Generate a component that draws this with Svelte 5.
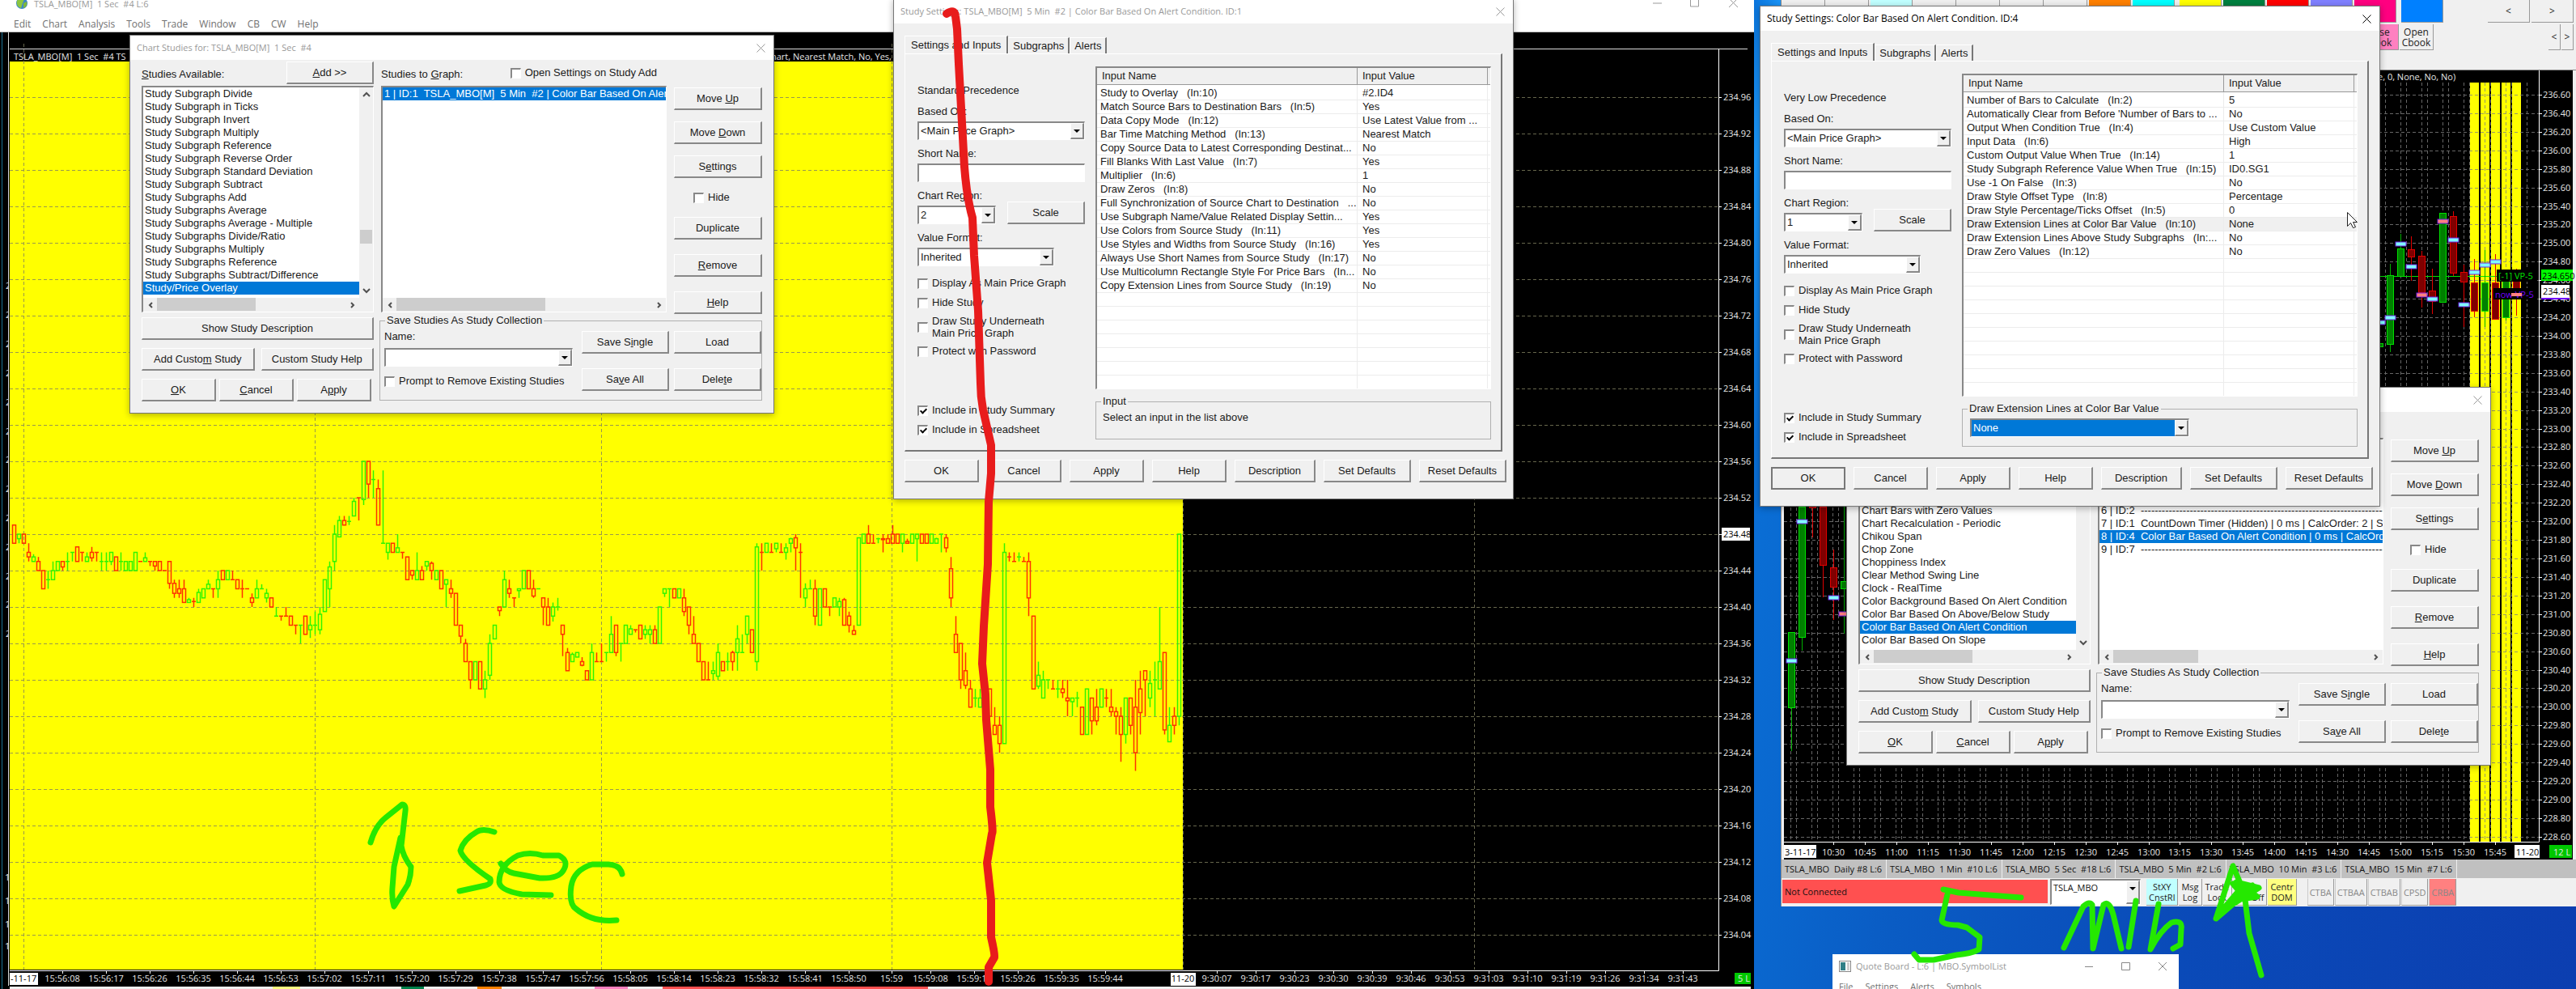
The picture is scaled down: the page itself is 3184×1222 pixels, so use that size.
<script>
    // Chart data

    // colour, high, body top, body bottom, low -- in cents from 234.48
    const secondBars = `
        r 1 1 -1 -1|g 0 0 -.5 -1|r 0 0 -1 -1|r -1 -2 -2.5 -3|g -2.2 -2.5 -3 -3|r -2.5 -3 -4 -4|r -4 -4 -6 -6|g -4 -5 -5 -6
        |g -3 -4 -5 -5|g -3 -3 -4 -4|r -3 -3 -3.6 -4|g -2 -3 -3 -4|g -2 -2 -2 -3|r -1.4 -1.4 -3 -3|r -2 -2 -2 -3|g -2 -2.5 -3 -3
        |r -1.4 -2 -2.6 -3|r -2 -2 -2 -3|g -2 -3 -3 -4|g -2 -3 -3 -4|g -2 -2 -3 -3.4|r -2.5 -2.5 -4 -4|g -2 -3 -3 -4|g -3 -3 -4 -4
        |g -3 -3 -4 -4|g -2 -2 -4 -4|r -3 -3 -3 -3|g -2 -2.6 -3 -3|r -3 -3 -3 -3.5|r -3 -3 -3.5 -4|r -3 -3 -4 -4|r -4 -4 -4 -4
        |r -3 -3 -5.4 -6|r -5 -5.4 -6.5 -7|r -5 -6 -6.5 -7|r -5 -6 -7.5 -7.5|g -7 -7.2 -7.5 -7.5|r -7 -7.4 -7.4 -8|g -6 -6.4 -7.5 -7.5|g -6 -6 -7 -7
        |g -5 -5.5 -6 -6|r -6 -6 -6 -7|g -4 -5 -6 -7|r -4 -4 -5 -5|g -4 -4 -5 -5|r -4 -5 -5 -5|r -5 -5 -6 -6|r -5 -6 -6 -7
        |r -6 -6 -6 -6|r -6.5 -7 -7.5 -8|g -5 -6 -7 -7|g -5.5 -6 -6 -6|g -6 -6.5 -7 -7.5|r -7 -7 -8 -8|g -8 -9 -9 -9|r -9 -9 -9 -9.5
        |r -8 -9 -9 -9|r -9 -9 -10 -10|r -10 -10 -10 -11|g -10 -10 -10 -12|r -9 -9 -11 -11|g -9 -10 -10.5 -11.4|g -8.5 -10 -10 -11|g -8 -8.8 -10.5 -11
        |g -5 -5 -8.5 -8.5|g -3 -3.6 -6 -8|g 1 0 -3 -4|g 2 1.5 -.3 -.3|r 2 1.5 1 1|g 2 1.4 1.4 1|g 4 3.6 2 2|r 4 4 4 1.5
        |g 8 8 3.8 3.2|r 8 8 5.5 4|g 7 6 6 4|r 6 5 1 1|g 7 -1 -1 -1|g -1 -1 -2 -2.8|r -1 -1 -2 -2|g 0 -1.5 -2 -2
        |r -2 -2 -2 -2.7|r -2.5 -2.5 -5 -5|r -4 -4 -4.5 -5|g -2 -4 -5 -5|r -3.5 -4 -5 -5|g -3 -3 -3.5 -4|r -3 -3.2 -4 -5|g -4 -4 -5 -5
        |r -4 -4 -6 -6|g -5 -5 -5.5 -8|r -5 -6 -6.5 -7|r -6.5 -6.5 -10 -10|r -10 -10 -11.2 -12|r -11.5 -12 -14 -14|r -14 -14 -16 -17|g -14 -14 -16 -16
        |r -14 -14 -17 -17|g -15 -16 -17 -18|g -11 -12 -15.5 -16|g -10 -10 -11.5 -11.5|r -8 -8 -8.4 -9|g -4 -5 -8 -8|r -5 -6 -6.5 -7|r -7 -7 -7 -8
        |g -6 -6 -6.2 -7|g -4 -4 -6 -6|r -4 -4 -6 -6|r -5 -6 -6.8 -7|g -6 -6 -6 -6|r -7 -7 -8 -10|r -7 -8 -10 -10|g -7.5 -8 -9 -9.6
        |g -7 -8 -8 -8.4|r -10 -10 -11 -13.4|r -12.5 -13 -15 -15|g -13 -13.2 -14 -14|g -13 -13 -13.5 -13.5|r -13.5 -14 -14.4 -14.5|r -15 -15 -16 -16|g -12 -13 -16 -16
        |r -13 -14 -14 -14|r -12 -14 -14 -14|g -13 -13 -13 -14|g -9 -11 -13 -13|r -10 -10 -13 -13.4|g -12 -12 -12 -14|g -10 -10 -12 -12|g -10 -10.4 -11 -11
        |r -10.5 -10.5 -10.5 -10.8|r -10 -10 -11.5 -11.5|g -10 -10.5 -11 -11.5|g -10 -10.5 -11 -12|r -10 -10.5 -12 -12|g -8 -8 -12 -12|g -6 -6 -6.5 -6.9|g -6 -6 -6 -8
        |r -6 -6 -7 -7|g -6 -6 -7 -7|r -6 -7 -8.5 -9|r -8 -8 -10 -11|r -9 -11 -12 -12|r -12 -12 -14 -14|r -14 -14 -16 -16|r -14 -16 -16 -16
        |g -14 -15 -15.3 -16|g -12 -13 -15.6 -16|r -14 -14 -15 -15|g -13 -14 -14 -15|r -12.8 -13 -14 -15|g -10 -11.5 -13 -15|g -11 -13 -13 -13|g -9 -9 -11 -12
        |r -10.5 -10.5 -13 -13|g -1 -1.4 -14 -15|r -1 -2 -2 -4|g -1 -1 -2 -2|r -1 -2 -2 -2|g -1 -1 -1.6 -2|r -1 -2 -2 -2|g -1 -1.5 -2 -2.8
        |g -.4 -.5 -1 -2|r 0 -.4 -1.5 -4|r -1 -2 -2 -7|g -5.4 -6 -7 -8|g -5 -6 -6 -6|r -5 -6 -9 -10|g -6 -6 -10 -10|r -6 -6 -8 -8
        |r -8 -8 -8 -9|g -7 -7 -8 -8|g -7 -7.4 -8 -9|r -7 -7.2 -10 -10|r -8.5 -9 -10 -10.8|r -10 -10.6 -11 -11|g -.4 -.4 -10 -10|g 0 0 -1 -1
        |r 1 0 -1 -1|r 0 -1 -1 -1|g -.4 -.5 -.5 -1|r 0 -.5 -.6 -2|r 0 -.5 -1 -1|r 1 0 -1 -1|r 0 0 -1 -1|g 0 0 -1 -2
        |r -.5 -.8 -1 -1|g 0 0 -1 -1|g 0 0 -.5 -3|r 0 0 -1 -1|r 0 0 -1 -1|g 0 0 -1 -1|g -.4 -.5 -1 -1|g 0 0 0 -2
        |r 0 -.4 -1.5 -2|r -2.5 -3.8 -7 -8|r -9 -11 -13 -13|r -12 -12 -16 -17|r -13 -15 -16.6 -17|r -16 -17 -19 -19|g -17 -18 -18 -19|g -17 -18 -19 -19
        |r -17 -17 -18 -18|r -17 -17 -20 -20|r -19 -21 -22 -22|r -20 -21 -23 -24|g -1 -2 -23 -23|r -2 -2.5 -2.5 -3|r -2 -3 -3 -3|g -2 -2.5 -2.5 -3
        |r -2.5 -3 -3 -3|r -2 -3 -7 -9|r -9 -9 -17 -17|g -14 -15.5 -16.7 -17|g -15 -16 -18 -18|g -16 -16 -16 -17|r -16 -17 -17 -17|g -16 -17 -17 -18
        |r -16 -17 -17.4 -18|r -16 -18 -18.3 -20|g -18 -18 -18.4 -20|g -17.3 -18 -18 -19|r -19 -19 -22 -22|g -17 -17 -22 -22|r -18 -18 -20.5 -22|r -17 -19 -20.5 -21
        |g -17 -17 -19 -19|r -17 -18 -18 -19|r -17 -19 -19.5 -20|r -19 -19.5 -20 -22|r -19 -20 -22 -25|g -18 -18 -22 -23|r -18 -18 -21 -22|r -16 -19 -24 -26
        |r -15 -17 -19.6 -22|r -15 -15 -16 -20|g -15 -16.4 -18 -19|g -14 -16 -16 -20|g -8 -14 -17 -17|r -13 -13 -21.5 -22|g -19 -21 -22.8 -22.8|r -19 -20 -21 -22
        |g 0 0 -20 -21`.split('|').map((bar, i) => {
            const [color, ...levels] = bar.trim().split(' ');
            const [high, top, bottom, low] = levels.map(v => 660 - Number(v) * 11.25);
            return { x: 17 + i * 6, color: color == 'g' ? '#30f500' : '#ff3000', high, top, bottom, low };
        });

    const lastPrice = '234.48';
    const secondPrices = Array.from({ length: 24 }, (_, i) => ({ y: 120 + i * 45, text: (234.96 - i * 0.04).toFixed(2) }));
    const secondDividers = [29, 389, 743, 1102, 1462, 1822];

    const secondTimes = [];
    for (let i = 0; i < 19; i++) {
        const s = 8 + i * 9;
        secondTimes.push({ x: 77 + i * 54, text: '15:' + (56 + Math.floor(s / 60)) + ':' + String(s % 60).padStart(2, '0') });
    }
    secondTimes.push({ x: 1102, text: '15:59' });
    ['15:59:08', '15:59:17', '15:59:26', '15:59:35', '15:59:44'].forEach((text, i) => secondTimes.push({ x: 1150 + i * 54, text }));
    ['9:30:07', '9:30:17', '9:30:23', '9:30:30', '9:30:39', '9:30:46', '9:30:53', '9:31:03', '9:31:10', '9:31:19', '9:31:26', '9:31:34', '9:31:43']
        .forEach((text, i) => secondTimes.push({ x: 1504 + i * 48, text }));

    const edgeMarks = [353, 389, 425, 461, 497, 533, 568, 604, 640, 676, 712, 747, 783];

    const stripColors = [
        { x: 337, w: 34, fill: '#ffff80' },
        { x: 496, w: 28, fill: '#00804a' },
        { x: 590, w: 30, fill: '#ff8000' },
        { x: 735, w: 41, fill: '#ff80c0' },
        { x: 819, w: 328, fill: '#ff5050' }
    ];

    // Five minute chart, in pixels of its own canvas (left edge of the plot is 0)
    const minuteBars = [
        { x: 9, up: true, high: 694, top: 694, bottom: 787, low: 841, mark: 729 },
        { x: 22, up: true, high: 500, top: 539, bottom: 700, low: 717, mark: 557 },
        { x: 35, up: false, high: 500, top: 500, bottom: 540, low: 577 },
        { x: 48, up: false, high: 500, top: 539, bottom: 611, low: 651 },
        { x: 61, up: false, high: 592, top: 614, bottom: 638, low: 679, mark: 651 },
        { x: 74, up: true, high: 500, top: 631, bottom: 640, low: 696, mark: 671, pink: true },
        { x: 736, up: true, high: 300, top: 337, bottom: 341, low: 367, mark: 311 },
        { x: 749, up: true, high: 239, top: 253, bottom: 338, low: 348, mark: 305 },
        { x: 762, up: true, high: 202, top: 220, bottom: 254, low: 254, mark: 214 },
        { x: 775, up: false, high: 205, top: 221, bottom: 230, low: 260, mark: 242 },
        { x: 788, up: false, high: 223, top: 229, bottom: 274, low: 293, mark: 277, pink: true },
        { x: 801, up: false, high: 245, top: 272, bottom: 285, low: 301, mark: 282 },
        { x: 814, up: true, high: 176, top: 176, bottom: 286, low: 286, mark: 186, pink: true },
        { x: 827, up: false, high: 174, top: 180, bottom: 250, low: 254, mark: 209 },
        { x: 840, up: false, high: 240, top: 249, bottom: 261, low: 317, mark: 289 },
        { x: 853, up: false, high: 233, top: 262, bottom: 297, low: 305, mark: 249 },
        { x: 866, up: true, high: 222, top: 262, bottom: 297, low: 317, mark: 240 },
        { x: 879, up: false, high: 227, top: 262, bottom: 307, low: 307, mark: 236 },
        { x: 892, up: true, high: 247, top: 260, bottom: 305, low: 309 },
        { x: 905, up: false, high: 245, top: 258, bottom: 269, low: 303 }
    ];
    const minutePrices = Array.from({ length: 41 }, (_, i) => ({ y: Math.round(30 + i * 22.92), text: (236.6 - i * 0.2).toFixed(2) }));
    const minuteTimes = Array.from({ length: 22 }, (_, i) => {
        const m = 630 + i * 15;
        return { x: Math.round(61 + i * 38.95), text: Math.floor(m / 60) + ':' + String(m % 60).padStart(2, '0') };
    });
    const minuteLines = Array.from({ length: 36 }, (_, i) => 918 - i * 26);
    const bands = [848, 861, 874, 887, 900];

    // Dialog data
    const overlayStudies = {
        title: 'Chart Studies for: TSLA_MBO[M]  1 Sec  #4',
        available: ['Study Subgraph Divide', 'Study Subgraph in Ticks', 'Study Subgraph Invert', 'Study Subgraph Multiply',
            'Study Subgraph Reference', 'Study Subgraph Reverse Order', 'Study Subgraph Standard Deviation', 'Study Subgraph Subtract',
            'Study Subgraphs Add', 'Study Subgraphs Average', 'Study Subgraphs Average - Multiple', 'Study Subgraphs Divide/Ratio',
            'Study Subgraphs Multiply', 'Study Subgraphs Reference', 'Study Subgraphs Subtract/Difference', 'Study/Price Overlay'],
        current: 15,
        scrolled: 159,
        graph: ['1 | ID:1  TSLA_MBO[M]  5 Min  #2 | Color Bar Based On Alert Condition'],
        currentGraph: 0,
        thumb: 184
    };

    const dashes = '-'.repeat(90);
    const colorStudies = {
        title: 'Chart Studies for: TSLA_MBO  5 Min  #2',
        available: ['Bollinger Bands', 'Bollinger Squeeze', 'Butterworth Filter', 'Chaikin Oscillator', 'Chande Momentum',
            'Chart Bars with Zero Values', 'Chart Recalculation - Periodic', 'Chikou Span', 'Chop Zone', 'Choppiness Index',
            'Clear Method Swing Line', 'Clock - RealTime', 'Color Background Based On Alert Condition',
            'Color Bar Based On Above/Below Study', 'Color Bar Based On Alert Condition', 'Color Bar Based On Slope'],
        current: 14,
        scrolled: 24,
        graph: ['1 | ID:3', '2 | ID:5', '3 | ID:6', '4 | ID:8', '5 | ID:9', '6 | ID:2  ' + dashes,
            '7 | ID:1  CountDown Timer (Hidden) | 0 ms | CalcOrder: 2 | S_CountDown', 
            '8 | ID:4  Color Bar Based On Alert Condition | 0 ms | CalcOrder: 3', '9 | ID:7  ' + dashes],
        currentGraph: 7,
        thumb: 105
    };

    const overlaySettings = {
        id: 'overlay',
        title: 'Study Settings: TSLA_MBO[M]  5 Min  #2 | Color Bar Based On Alert Condition. ID:1',
        precedence: 'Standard Precedence',
        region: '2',
        group: 'Input',
        inputs: [
            ['Study to Overlay   (In:10)', '#2.ID4'],
            ['Match Source Bars to Destination Bars   (In:5)', 'Yes'],
            ['Data Copy Mode   (In:12)', 'Use Latest Value from ...'],
            ['Bar Time Matching Method   (In:13)', 'Nearest Match'],
            ['Copy Source Data to Latest Corresponding Destinat...', 'No'],
            ['Fill Blanks With Last Value   (In:7)', 'Yes'],
            ['Multiplier   (In:6)', '1'],
            ['Draw Zeros   (In:8)', 'No'],
            ['Full Synchronization of Source Chart to Destination   ...', 'No'],
            ['Use Subgraph Name/Value Related Display Settin...', 'Yes'],
            ['Use Colors from Source Study   (In:11)', 'Yes'],
            ['Use Styles and Widths from Source Study   (In:16)', 'Yes'],
            ['Always Use Short Names from Source Study   (In:17)', 'No'],
            ['Use Multicolumn Rectangle Style For Price Bars   (In...', 'No'],
            ['Copy Extension Lines from Source Study   (In:19)', 'No']
        ]
    };

    const colorSettings = {
        id: 'color',
        title: 'Study Settings: Color Bar Based On Alert Condition. ID:4',
        precedence: 'Very Low Precedence',
        region: '1',
        group: 'Draw Extension Lines at Color Bar Value',
        active: true,
        current: 9,
        inputs: [
            ['Number of Bars to Calculate   (In:2)', '5'],
            ["Automatically Clear from Before 'Number of Bars to ...", 'No'],
            ['Output When Condition True   (In:4)', 'Use Custom Value'],
            ['Input Data   (In:6)', 'High'],
            ['Custom Output Value When True   (In:14)', '1'],
            ['Study Subgraph Reference Value When True   (In:15)', 'ID0.SG1'],
            ['Use -1 On False   (In:3)', 'No'],
            ['Draw Style Offset Type   (In:8)', 'Percentage'],
            ['Draw Style Percentage/Ticks Offset   (In:5)', '0'],
            ['Draw Extension Lines at Color Bar Value   (In:10)', 'None'],
            ['Draw Extension Lines Above Study Subgraphs   (In:...', 'No'],
            ['Draw Zero Values   (In:12)', 'No']
        ]
    };

    const menus = ['Edit', 'Chart', 'Analysis', 'Tools', 'Trade', 'Window', 'CB', 'CW', 'Help'];
    const toolColors = ['plain', 'plain', 'cyan', 'plain', 'plain', 'plain', 'plain', 'orange', 'aqua', 'yellow', 'green', 'red', 'lilac', 'magenta', 'blue'];
    const toolLabels = ['Hide', 'Hide', 'StXY'];
    const chartTabs = ['TSLA_MBO  Daily #8 L:6', 'TSLA_MBO  1 Min  #10 L:6', 'TSLA_MBO  5 Sec  #18 L:6', 'TSLA_MBO  5 Min  #2 L:6',
        'TSLA_MBO  10 Min  #3 L:6', 'TSLA_MBO  15 Min  #7 L:6'];
    const shortcuts = ['CTBA', 'CTBAA', 'CTBAB', 'CPSD', 'CRBA'];
</script>

{#snippet closeIcon()}
    <svg width="11" height="11" viewBox="0 0 11 11" aria-hidden="true"><path d="M.5.5l10 10M10.5.5l-10 10" stroke="currentColor" fill="none" /></svg>
{/snippet}

{#snippet combo(id, value, label)}
    <div class="combo">
        <select {id} aria-label={label}><option>{value}</option></select>
        <span class="combo-arrow"></span>
    </div>
{/snippet}

{#snippet hscroll(width)}
    <div class="hscroll">
        <button class="scroll" aria-label="Scroll left"><svg width="6" height="8"><path d="M5 1L2 4l3 3" /></svg></button>
        <div class="track"><div class="thumb" style:width="{width}px"></div></div>
        <button class="scroll" aria-label="Scroll right"><svg width="6" height="8"><path d="M1 1l3 3-3 3" /></svg></button>
    </div>
{/snippet}

{#snippet studiesDialog(data, place)}
    <section class="window {place}">
        <header class="titlebar">
            <span>{data.title}</span>
            <button class="close" aria-label="Close">{@render closeIcon()}</button>
        </header>
        <div class="studies">
            <div class="studies-left">
                <div class="head">
                    <span><u>S</u>tudies Available:</span>
                    <button class="btn add"><u>A</u>dd &gt;&gt;</button>
                </div>
                <div class="listbox">
                    <div class="list-main">
                        <ul>
                            {#each data.available as item, i}
                                <li class:selected={i == data.current}>{item}</li>
                            {/each}
                        </ul>
                        <div class="vscroll">
                            <button class="scroll" aria-label="Scroll up"><svg width="10" height="8"><path d="M1 6l4-4 4 4" /></svg></button>
                            <div class="vtrack"><div class="vthumb" style:margin-top="{data.scrolled}px"></div></div>
                            <button class="scroll" aria-label="Scroll down"><svg width="10" height="8"><path d="M1 1l4 4 4-4" /></svg></button>
                        </div>
                    </div>
                    {@render hscroll(122)}
                </div>
                <button class="btn describe">Show Study Description</button>
                <div class="row two">
                    <button class="btn">Add Custo<u>m</u> Study</button>
                    <button class="btn">Custom Study Help</button>
                </div>
                <div class="row three">
                    <button class="btn"><u>O</u>K</button>
                    <button class="btn"><u>C</u>ancel</button>
                    <button class="btn">A<u>p</u>ply</button>
                </div>
            </div>
            <div class="studies-right">
                <div class="head">
                    <span>Studies to <u>G</u>raph:</span>
                    <label class="check"><input type="checkbox" />Open Settings on Study Add</label>
                </div>
                <div class="graph-row">
                    <div class="listbox graph">
                        <ul>
                            {#each data.graph as item, i}
                                <li class:selected={i == data.currentGraph}>{item}</li>
                            {/each}
                        </ul>
                        {@render hscroll(data.thumb)}
                    </div>
                    <div class="actions">
                        <button class="btn">Move <u>U</u>p</button>
                        <button class="btn">Move <u>D</u>own</button>
                        <button class="btn">S<u>e</u>ttings</button>
                        <label class="check hide"><input type="checkbox" />Hide</label>
                        <div class="actions-low">
                            <button class="btn">Duplicate</button>
                            <button class="btn"><u>R</u>emove</button>
                            <button class="btn"><u>H</u>elp</button>
                        </div>
                    </div>
                </div>
                <fieldset class="collection">
                    <legend>Save Studies As Study Collection</legend>
                    <div class="collection-grid">
                        <div class="collection-name">
                            <span>Name:</span>
                            {@render combo(place + '-name', '', 'Name')}
                            <label class="check"><input type="checkbox" />Prompt to Remove Existing Studies</label>
                        </div>
                        <div class="collection-buttons">
                            <button class="btn">Save S<u>i</u>ngle</button>
                            <button class="btn">Load</button>
                            <button class="btn">Sa<u>v</u>e All</button>
                            <button class="btn">Dele<u>t</u>e</button>
                        </div>
                    </div>
                </fieldset>
            </div>
        </div>
    </section>
{/snippet}

{#snippet settingsDialog(data, place)}
    <section class="window {place}" class:active={data.active}>
        <header class="titlebar">
            <span>{data.title}</span>
            <button class="close" aria-label="Close">{@render closeIcon()}</button>
        </header>
        <div class="settings">
            <div class="tabs">
                <button class="tab current">Settings and Inputs</button>
                <button class="tab">Subgraphs</button>
                <button class="tab">Alerts</button>
            </div>
            <div class="panel">
                <div class="form">
                    <span class="precedence">{data.precedence}</span>
                    <div class="field">
                        <label for="{data.id}-based">Based On:</label>
                        {@render combo(data.id + '-based', '<Main Price Graph>')}
                    </div>
                    <div class="field">
                        <label for="{data.id}-short">Short Name:</label>
                        <input class="text" id="{data.id}-short" type="text" />
                    </div>
                    <div class="field region">
                        <div>
                            <label for="{data.id}-region">Chart Region:</label>
                            {@render combo(data.id + '-region', data.region)}
                        </div>
                        <button class="btn">Scale</button>
                    </div>
                    <div class="field format">
                        <label for="{data.id}-format">Value Format:</label>
                        {@render combo(data.id + '-format', 'Inherited')}
                    </div>
                    <label class="check"><input type="checkbox" />Display As Main Price Graph</label>
                    <label class="check"><input type="checkbox" />Hide Study</label>
                    <label class="check tall"><input type="checkbox" /><span>Draw Study Underneath<br />Main Price Graph</span></label>
                    <label class="check"><input type="checkbox" />Protect with Password</label>
                    <div class="include">
                        <label class="check"><input type="checkbox" checked />Include in Study Summary</label>
                        <label class="check"><input type="checkbox" checked />Include in Spreadsheet</label>
                    </div>
                </div>
                <div class="inputs">
                    <div class="table-box">
                        <table>
                            <thead>
                                <tr><th>Input Name</th><th>Input Value</th><th class="rest"></th></tr>
                            </thead>
                            <tbody>
                                {#each data.inputs as [name, value], i}
                                    <tr class:picked={i == data.current}><td>{name}</td><td>{value}</td><td class="rest"></td></tr>
                                {/each}
                                {#each Array(22 - data.inputs.length) as _}
                                    <tr><td></td><td></td><td class="rest"></td></tr>
                                {/each}
                            </tbody>
                        </table>
                    </div>
                    <fieldset class="input-group">
                        <legend>{data.group}</legend>
                        {#if data.active}
                            <div class="picker">{@render combo('picker', 'None', data.group)}</div>
                        {:else}
                            <p>Select an input in the list above</p>
                        {/if}
                    </fieldset>
                </div>
            </div>
            <div class="footer">
                <button class="btn" class:default={data.active}>OK</button>
                <button class="btn">Cancel</button>
                <button class="btn">Apply</button>
                <button class="btn">Help</button>
                <button class="btn wide">Description</button>
                <button class="btn wider">Set Defaults</button>
                <button class="btn wider">Reset Defaults</button>
            </div>
        </div>
    </section>
{/snippet}

<main class="desktop">
    <div class="screen left">
        <header class="app-title">
            <svg width="15" height="15" viewBox="0 0 15 15" aria-hidden="true">
                <circle cx="7" cy="7" r="7" fill="#3b86c8" />
                <path d="M1 4c3-4 7-4 9-2l-2 5-2 6C2 12 0 8 1 4z" fill="#8cc63f" />
                <path d="M9 7l4-2c1 4-1 7-4 8z" fill="#7fb83a" />
            </svg>
            <span>TSLA_MBO[M]  1 Sec  #4 L:6</span>
            <svg class="controls" width="120" height="10" aria-hidden="true">
                <path d="M4 4h11M50.500 -4v12h10v-12M98 -2l11 11M109-2l-11 11" stroke="#999" fill="none" />
            </svg>
        </header>
        <nav>
            {#each menus as item}
                <button>{item}</button>
            {/each}
        </nav>
        <!-- one second chart: the plot, its price scale and its time scale -->
        <svg class="chart" viewBox="0 40 2168 1182" preserveAspectRatio="xMinYMin slice">
            <rect y="40" width="2168" height="1182" fill="#000" />
            <path d="M2.500 0V1222" stroke="#1b7396" />
            <g class="axis">
                {#each edgeMarks as y}
                    <text x="7" y={y + 4}>2</text>
                {/each}
                {#each [1084, 1113, 1142, 1169] as y}
                    <text x="6" y={y + 4}>1</text>
                {/each}
            </g>
            <rect x="11" y="40" width="2157" height="1182" fill="#000" />
            <path d="M10.500 40V1218M12 60.500H2160" stroke="#ddd" />
            <rect x="12" y="76" width="1450" height="1122" fill="#ff0" />
            <text class="head-text" x="17" y="74">TSLA_MBO[M]  1 Sec  #4 TS</text>
            <text class="head-text" x="953" y="74">hart, Nearest Match, No, Yes,</text>
            <g stroke="#808060" stroke-dasharray="4 3" opacity="0.8">
                {#each secondPrices as price}
                    <path d="M12 {price.y + 0.5}H2124" />
                {/each}
                {#each secondDividers as x}
                    <path d="M{x + 0.5} 54V1198" />
                {/each}
            </g>
            <g fill="none" stroke-width="1.500">
                {#each secondBars as bar}
                    <path d="M{bar.x + 0.5} {bar.high}V{bar.top}M{bar.x + 0.5} {bar.bottom}V{bar.low}" stroke={bar.color} />
                    {#if bar.top == bar.bottom}
                        <path d="M{bar.x - 2} {bar.top}h5" stroke={bar.color} />
                    {:else}
                        <rect x={bar.x - 1.5} y={bar.top} width="4" height={bar.bottom - bar.top} stroke={bar.color} />
                    {/if}
                {/each}
            </g>
            <path d="M12 1199.500H2124.500V60" stroke="#fff" fill="none" />
            <g class="axis">
                <rect x="2128" y="652" width="35" height="16" fill="#fff" />
                {#each secondPrices as price}
                    <path d="M2124 {price.y + 0.5}h4" stroke="#fff" />
                    <text class:dark={price.text == lastPrice} x="2130" y={price.y + 4}>{price.text}</text>
                {/each}
                {#each secondTimes as time}
                    <path d="M{time.x + 0.5} 1199v4" stroke="#fff" />
                    <text x={time.x} y="1213" text-anchor="middle">{time.text}</text>
                {/each}
                <rect x="12" y="1202" width="35" height="15" fill="#fff" />
                <text class="dark" x="13" y="1213">-11-17</text>
                <rect x="1447" y="1202" width="31" height="16" fill="#fff" />
                <text class="dark" x="1462" y="1213" text-anchor="middle">11-20</text>
                <rect x="2144" y="1202" width="20" height="14" fill="#00c800" />
                <text x="2148" y="1213">5 L</text>
            </g>
            <rect x="12" y="1219" width="2152" height="3" fill="#f0f0f0" />
            {#each stripColors as part}
                <rect x={part.x} y="1219" width={part.w} height="3" fill={part.fill} />
            {/each}
        </svg>
    </div>

    <div class="screen right">
        <div class="trader">
            <div class="toolbar">
                {#each toolColors as color, i}
                    <button class="tool {color}" aria-label="Tool {i + 1}">{toolLabels[i] ?? ''}</button>
                {/each}
                <span class="spacer"></span>
                <button class="tool plain">&lt;</button>
                <button class="tool plain">&gt;</button>
            </div>
            <div class="toolbar second">
                <span class="spacer"></span>
                <button class="tool pink">Close<br />Cbook</button>
                <button class="tool plain open">Open<br />Cbook</button>
                <button class="tool plain slim">&lt;</button>
                <button class="tool plain slim">&gt;</button>
            </div>
            <!-- five minute chart -->
            <svg class="minute" viewBox="0 0 979 975" preserveAspectRatio="xMinYMin slice">
                <rect width="975" height="975" fill="#000" />
                {#each bands as x}
                    <rect {x} y="15" width="11" height="938" fill="#ff0" />
                {/each}
                <g stroke="#808080" stroke-dasharray="4 3" opacity="0.8">
                    {#each minutePrices as price}
                        <path d="M0 {price.y + 0.5}H933" />
                    {/each}
                    {#each minuteLines as x}
                        <path d="M{x + 0.5} 15V953M{x - 18.5} 15V953" />
                    {/each}
                </g>
                <path d="M730 254.500H885" stroke="#00e000" />
                {#each minuteBars as bar}
                    <g class:up={bar.up} class="bar">
                        <path d="M{bar.x + 0.5} {bar.high}V{bar.low}" />
                        <rect x={bar.x - 3.5} y={bar.top + 0.5} width="8" height={bar.bottom - bar.top} />
                    </g>
                    {#if bar.mark}
                        <rect x={bar.x - 6} y={bar.mark - 2} width="13" height="5" fill={bar.pink ? '#ff8080' : '#80ffff'} stroke="#7020e0" stroke-width="1" />
                    {/if}
                {/each}
                <g class="axis">
                    <text x="734" y="12">e, 0, None, No, No)</text>
                    <rect x="881" y="246" width="49" height="15" />
                    <text x="883" y="258" fill="#00e000">[-1] VP-5</text>
                    <rect x="877" y="269" width="53" height="14" />
                    <text x="879" y="281" fill="#7000ff">now VP-5</text>
                    <rect x="899" y="275" width="13" height="4" fill="#ff8080" />
                    <path d="M933.500 0V953.500H0" stroke="#fff" fill="none" />
                    {#each minutePrices as price}
                        <path d="M933 {price.y + 0.5}h4" stroke="#fff" />
                        <text x="938" y={price.y + 4}>{price.text}</text>
                    {/each}
                    <rect x="936" y="246" width="39" height="14" fill="#0f0" />
                    <text class="dark" x="937" y="258">234.650</text>
                    <rect x="936" y="265" width="35" height="16" fill="#fff" />
                    <rect x="936" y="281" width="35" height="2" fill="#7000ff" />
                    <text class="dark" x="938" y="277">234.48</text>
                    {#each minuteTimes as time}
                        <path d="M{time.x + 0.5} 953v4" stroke="#fff" />
                        <text x={time.x} y="970" text-anchor="middle">{time.text}</text>
                    {/each}
                    <rect x="0" y="957" width="40" height="16" fill="#fff" />
                    <text class="dark" x="1" y="970">3-11-17</text>
                    <rect x="903" y="957" width="31" height="16" fill="#fff" />
                    <text class="dark" x="919" y="970" text-anchor="middle">11-20</text>
                    <rect x="946" y="957" width="28" height="16" fill="#00c800" />
                    <text x="951" y="970">12 L</text>
                </g>
            </svg>
            <div class="chart-tabs">
                {#each chartTabs as tab}
                    <button>{tab}</button>
                {/each}
            </div>
            <div class="status">
                <span class="offline">Not Connected</span>
                <div class="symbol">{@render combo('symbol', 'TSLA_MBO', 'Symbol')}</div>
                <button class="tool cyan">StXY<br />CnstRl</button>
                <button class="tool plain">Msg<br />Log</button>
                <button class="tool plain">Trade<br />Lock</button>
                <button class="tool plain">Cht<br />On/Off</button>
                <button class="tool lemon">Centr<br />DOM</button>
                <span class="gap"></span>
                {#each shortcuts as item}
                    <button class="tool dim" class:alert={item == 'CRBA'}>{item}</button>
                {/each}
            </div>
        </div>

        <section class="quote">
            <header class="quote-title">
                <svg width="15" height="14" viewBox="0 0 15 14" aria-hidden="true">
                    <rect x=".5" y=".5" width="14" height="13" fill="#fff" stroke="#888" />
                    <rect x="2" y="2" width="6" height="10" fill="#2f7f86" />
                    <rect x="10" y="2" width="3" height="10" fill="#ccc" />
                </svg>
                <span>Quote Board - L:6 | MBO.SymbolList</span>
                <svg width="104" height="12" viewBox="0 0 104 12" aria-hidden="true">
                    <path d="M0 6.500h10M45.500 1.500h10v9h-10zM91 1l10 10M101 1l-10 10" stroke="#888" fill="none" />
                </svg>
            </header>
            <nav>
                <button>File</button><button>Settings</button><button>Alerts</button><button>Symbols</button>
            </nav>
        </section>
        {@render studiesDialog(colorStudies, 'color-studies')}
        {@render settingsDialog(colorSettings, 'color-settings')}
    </div>

    {@render studiesDialog(overlayStudies, 'overlay-studies')}
    {@render settingsDialog(overlaySettings, 'overlay-settings')}

    <!-- pen marks drawn over both screens, and the pointer -->
    <svg class="ink" viewBox="0 0 3184 1222" preserveAspectRatio="xMinYMin meet" aria-hidden="true">
        <path class="red-pen" d="M1170 17Q1180 10 1181 20L1183 36 1185 79 1192 206Q1195 245 1202 269L1204 316 1209 384 1212 474Q1212 490 1215 506L1225 550 1225 585 1222 620 1221 697 1216 774 1214 820 1218 858 1219 889 1224 951 1224 997Q1228 1030 1226 1030L1220 1066 1225 1112 1225 1158Q1230 1180 1229 1183L1222 1195V1213" />
        <g class="green-pen">
            <path d="M458 1041Q464 1020 477 1010L497 994Q502 994 501 1002L496 1045Q498 1058 508 1071 508 1082 504 1093L487 1120Q484 1110 485 1097L487 1071 495 1035" />
            <path d="M611 1028Q596 1023 589 1028 573 1037 569 1051 572 1063 606 1086 608 1092 600 1094L568 1101" />
            <path d="M619 1067Q625 1077 635 1079L667 1085Q690 1086 696 1076 704 1064 691 1057L671 1057Q655 1052 640 1057 617 1069 617 1090 618 1100 645 1105L681 1106" />
            <path d="M769 1080Q767 1069 752 1068H732Q709 1075 706 1095 703 1117 712 1123 732 1140 762 1137" />
            <path d="M2402 1099L2421 1103 2498 1109M2407 1105L2400 1137Q2401 1143 2420 1143L2431 1146 2447 1158 2446 1173Q2438 1178 2418 1180L2390 1186H2372L2366 1179" />
            <path d="M2551 1171L2575 1120Q2583 1113 2586 1118L2587 1172 2600 1118Q2607 1112 2612 1130L2622 1172M2640 1113L2631 1170M2668 1117L2658 1173Q2670 1150 2684 1140 2698 1136 2696 1148L2695 1167 2686 1172" />
            <path d="M2795 1205L2780 1153 2774 1103 2760 1070 2739 1135 2760 1117 2792 1097 2764 1090 2790 1108 2762 1112 2772 1095 2742 1130 2784 1094 2770 1104 2760 1092" />
        </g>
        <path d="M2901.500 262.500v17l4-4 3 6 3-1-3-6h5z" fill="#fff" stroke="#222" />
    </svg>
</main>

<style>
    :global(body) {
        margin: 0;
        overflow: hidden;
        background-color: #000;
    }

    button, select, input {
        font: inherit;
        color: inherit;
        margin: 0;
        padding: 0;
    }

    button {
        border: 0;
        background: none;
        white-space: pre;
    }

    .desktop {
        position: relative;
        display: grid;
        grid-template-columns: minmax(0, 1fr) 1016px;
        height: 100vh;
        overflow: hidden;
        font-family: "Liberation Sans", Arial, sans-serif;
        font-size: 13px;
        line-height: 16px;
        color: #1a1a1a;
    }

    .screen {
        position: relative;
        overflow: hidden;
        font-family: "Open Sans", "Noto Sans", sans-serif;
        font-size: 12px;
    }

    /* Left screen */
    .left {
        display: flex;
        flex-direction: column;
        background-color: #fff;
    }

    .app-title {
        display: flex;
        gap: 7px;
        height: 20px;
        padding-left: 20px;
        color: #999;
        font-size: 11px;
        line-height: 10px;
        white-space: pre;
    }

    .app-title svg {
        flex: none;
        margin-top: -3px;
    }

    .app-title .controls {
        margin: 0 9px 0 auto;
    }

    nav {
        display: flex;
        gap: 15px;
        height: 20px;
        padding-left: 17px;
        color: #707070;
    }

    .left nav {
        box-sizing: border-box;
        gap: 14px;
        background-color: #fff;
        border-bottom: 1px solid #bbb;
    }

    .chart {
        flex: 1;
        min-height: 0;
        width: 100%;
    }

    .axis text, .head-text {
        font-size: 11px;
        white-space: pre;
    }

    .axis text:not([fill]), .head-text {
        fill: #e6e6e6;
    }

    .axis .dark:not([fill]) {
        fill: #000;
    }

    /* Right screen */
    .right {
        background: linear-gradient(100deg, #0a74dc 0%, #1c98fa 3%, #0a6fd6 8%, #0a5cc4 30%, #0a4ab8 60%, #0c3eb0 100%);
    }

    .trader {
        display: flex;
        flex-direction: column;
        height: 1120px;
        margin-left: 33px;
        background-color: #f0f0f0;
        border-left: 1px solid #888;
    }

    .toolbar {
        display: flex;
        gap: 2px;
        height: 29px;
        padding: 0 3px 0 2px;
        flex: none;
    }

    .second {
        height: 58px;
        padding-top: 1px;
        gap: 1px;
        border-bottom: 1px solid #888;
        box-sizing: border-box;
    }

    .tool {
        box-sizing: border-box;
        border-right: 1px solid #999;
        border-bottom: 1px solid #999;
        background-color: #f0f0f0;
        line-height: 13px;
        color: #222;
    }

    .toolbar .tool {
        width: 52px;
        height: 28px;
    }

    .toolbar .yellow, .toolbar .blue {
        margin-left: 4px;
    }

    .toolbar.second .tool {
        height: 32px;
    }

    .toolbar.second .open {
        width: 42px;
        margin-right: 141px;
    }

    .toolbar.second .slim {
        width: 15px;
    }

    .spacer {
        flex: 1;
    }

    .toolbar .cyan, .status .cyan { background-color: #c0ffff; }
    .orange { background-color: #ff8000; }
    .aqua { background-color: #0ff; }
    .yellow { background-color: #ff0; }
    .green { background-color: #008040; }
    .red { background-color: #f00; }
    .lilac { background-color: #8080ff; }
    .magenta { background-color: #ff0080; }
    .blue { background-color: #0080ff; }
    .pink { background-color: #ff80c0; }
    .lemon { background-color: #ffff80; }

    .minute {
        flex: 1;
        min-height: 0;
        margin-left: 3px;
    }

    .bar path {
        stroke: #e00000;
    }

    .bar rect {
        fill: #800000;
        stroke: #e00000;
    }

    .bar.up path {
        stroke: #00b000;
    }

    .bar.up rect {
        fill: #008000;
        stroke: #00e000;
    }

    .chart-tabs {
        display: flex;
        height: 23px;
        background-color: #c0c0c0;
        color: #111;
        font-size: 11px;
    }

    .chart-tabs button {
        padding: 0 5px 0 4px;
        border-right: 1px solid #eee;
    }

    .status {
        display: flex;
        box-sizing: border-box;
        height: 35px;
        padding: 1px 0;
        color: #111;
        font-size: 11px;
    }

    .offline {
        width: 325px;
        margin: 1px 3px 3px 1px;
        padding-left: 3px;
        background-color: #ff5050;
        line-height: 29px;
    }

    .symbol {
        width: 112px;
        margin-right: 7px;
    }

    .status .tool {
        padding: 0 3px;
        margin-right: 1px;
    }

    .status .dim {
        padding: 0 2px;
        color: #888;
        border-left: 1px solid #ccc;
    }

    .status .alert {
        background-color: #ff8080;
    }

    .gap {
        width: 12px;
    }

    .quote {
        position: absolute;
        left: 97px;
        top: 1179px;
        width: 428px;
        height: 60px;
        background-color: #fff;
        color: #999;
    }

    .quote-title {
        display: flex;
        align-items: center;
        gap: 6px;
        height: 30px;
        padding: 0 12px 0 8px;
        font-size: 11px;
    }

    .quote-title span {
        flex: 1;
    }

    .quote nav {
        padding-left: 8px;
        font-size: 11px;
    }

    /* Windows */
    .window {
        position: absolute;
        box-sizing: border-box;
        border: 1px solid #777;
        background-color: #f0f0f0;
        box-shadow: 0 2px 8px rgba(0, 0, 0, 0.3);
        font-family: "Liberation Sans", Arial, sans-serif;
        font-size: 13px;
    }

    .overlay-studies, .color-studies {
        width: 797px;
        height: 468px;
    }

    .overlay-settings, .color-settings {
        width: 767px;
        height: 619px;
    }

    .overlay-studies { left: 160px; top: 43px; }
    .overlay-settings { left: 1104px; top: -2px; }
    .color-studies { left: 114px; top: 478px; }
    .color-settings { left: 7px; top: 7px; }

    .titlebar {
        display: flex;
        align-items: center;
        justify-content: space-between;
        height: 30px;
        padding: 0 10px 0 8px;
        background-color: #fff;
        color: #999;
        font-family: "Open Sans", "Noto Sans", sans-serif;
        font-size: 11px;
        white-space: pre;
    }

    .active .titlebar {
        color: #000;
        font-size: 12px;
    }

    .close {
        display: flex;
    }

    .btn {
        flex-shrink: 0;
        box-sizing: border-box;
        height: 28px;
        border-style: solid;
        border-width: 1px 2px 2px 1px;
        border-color: #fff #888 #888 #fff;
        background-color: #f0f0f0;
        text-align: center;
    }

    .btn.default {
        border: 2px solid #777;
    }

    .check {
        display: flex;
        align-items: center;
        gap: 5px;
    }

    .check input {
        appearance: none;
        flex: none;
        display: grid;
        width: 13px;
        height: 13px;
        border-style: solid;
        border-width: 2px 1px 1px 2px;
        border-color: #888 #fff #fff #888;
        background-color: #fff;
        box-sizing: border-box;
    }

    .check input:checked::after {
        content: "";
        justify-self: center;
        width: 3px;
        height: 6px;
        border: solid #000;
        border-width: 0 2px 2px 0;
        transform: rotate(45deg);
    }

    .combo {
        position: relative;
        height: 23px;
    }

    .combo select, .text {
        appearance: none;
        box-sizing: border-box;
        width: 100%;
        height: 23px;
        padding-left: 2px;
        border-style: solid;
        border-width: 2px 1px 1px 2px;
        border-color: #888 #fff #fff #888;
        border-radius: 0;
        background-color: #fff;
    }

    .combo-arrow {
        position: absolute;
        top: 2px;
        right: 1px;
        box-sizing: border-box;
        width: 17px;
        height: 20px;
        border-style: solid;
        border-width: 1px 2px 2px 1px;
        border-color: #fff #888 #888 #fff;
        background-color: #f0f0f0;
        pointer-events: none;
    }

    .combo-arrow::after {
        content: "";
        display: block;
        margin: 7px 3px;
        border: 4px solid transparent;
        border-top-color: #000;
        border-bottom: 0;
    }

    .symbol .combo, .symbol select {
        height: 32px;
    }

    .symbol select {
        padding-bottom: 12px;
    }

    .symbol .combo-arrow {
        height: 29px;
    }

    ul {
        flex: 1;
        margin: 0;
        padding: 0;
        list-style: none;
        background-color: #fff;
        overflow: hidden;
    }

    li {
        height: 16px;
        padding-left: 2px;
        white-space: pre;
    }

    .selected {
        background-color: #0078d7;
        color: #fff;
    }

    .listbox {
        display: flex;
        flex-direction: column;
        box-sizing: border-box;
        height: 280px;
        border-style: solid;
        border-width: 2px 1px 1px 2px;
        border-color: #888 #fff #fff #888;
    }

    .list-main {
        display: flex;
        flex: 1;
    }

    .vscroll {
        display: flex;
        flex-direction: column;
        width: 17px;
    }

    .vtrack {
        flex: 1;
    }

    .vthumb {
        height: 17px;
        margin: 0 1px;
        background-color: #cdcdcd;
    }

    .scroll {
        display: flex;
        align-items: center;
        justify-content: center;
        width: 17px;
        height: 17px;
    }

    .scroll path {
        fill: none;
        stroke: #505050;
        stroke-width: 2;
    }

    .hscroll {
        display: flex;
        height: 17px;
        padding-right: 17px;
    }

    .graph .hscroll {
        padding-right: 0;
    }

    .track {
        flex: 1;
    }

    .thumb {
        height: 16px;
        background-color: #cdcdcd;
    }

    .studies {
        display: flex;
        gap: 7px;
        padding: 2px 14px 0;
    }

    .studies-left {
        display: flex;
        flex-direction: column;
        width: 287px;
    }

    .studies-right {
        flex: 1;
    }

    .head {
        display: flex;
        align-items: center;
        justify-content: space-between;
        height: 28px;
        margin-bottom: 2px;
    }

    .head > span {
        padding-top: 4px;
    }

    .add {
        width: 108px;
    }

    .describe {
        margin-top: 6px;
    }

    .row {
        display: grid;
        margin-top: 10px;
    }

    .two {
        grid-template-columns: 1fr 1fr;
        gap: 8px;
    }

    .three {
        grid-template-columns: 1fr 1fr 1fr;
        gap: 4px;
        padding-right: 3px;
    }

    .studies-right .head {
        padding: 0 130px 0 2px;
    }

    .graph-row {
        display: flex;
        justify-content: space-between;
        height: 280px;
        padding-left: 2px;
    }

    .graph {
        width: 353px;
    }

    .actions, .actions-low {
        display: flex;
        flex-direction: column;
        gap: 14px;
        width: 109px;
    }

    .actions {
        padding-top: 2px;
    }

    .actions-low {
        gap: 18px;
    }

    .hide {
        flex: none;
        height: 20px;
        padding: 0 24px;
    }

    fieldset {
        box-sizing: border-box;
        min-width: 0;
        margin: 0;
        padding: 0;
        border: 1px solid #b0b0b0;
    }

    legend {
        margin-left: 6px;
        padding: 0 2px;
    }

    .collection {
        height: 107px;
        margin-top: 2px;
    }

    .collection-grid {
        display: flex;
        justify-content: space-between;
        padding: 4px 0 0 5px;
    }

    .collection-name {
        display: flex;
        flex-direction: column;
        gap: 6px;
        width: 233px;
    }

    .collection-name .check {
        margin-top: 4px;
    }

    .collection-buttons {
        display: grid;
        grid-template-columns: 108px 108px;
        gap: 18px 6px;
        padding-top: 1px;
    }

    .settings {
        padding: 15px 13px 0;
    }

    .tabs {
        display: flex;
        align-items: flex-end;
    }

    .tab {
        box-sizing: border-box;
        height: 20px;
        padding: 0 5px;
        border-style: solid;
        border-width: 1px 2px 0 1px;
        border-color: #fff #777 #fff #fff;
    }

    .tab.current {
        height: 22px;
        padding: 0 7px;
    }

    .panel {
        display: flex;
        justify-content: space-between;
        box-sizing: border-box;
        height: 492px;
        padding: 15px 12px 0 15px;
        border-style: solid;
        border-width: 1px 2px 2px 1px;
        border-color: #fff #777 #777 #fff;
    }

    .form {
        width: 207px;
        padding-top: 22px;
    }

    .precedence {
        display: block;
        margin-bottom: 10px;
    }

    .field {
        margin-bottom: 9px;
    }

    .field label {
        display: block;
        margin-bottom: 4px;
    }

    .text {
        display: block;
    }

    .region {
        display: flex;
        align-items: flex-end;
        gap: 14px;
    }

    .region > div {
        width: 97px;
    }

    .region .btn {
        flex: 1;
    }

    .format .combo {
        width: 169px;
    }

    .form .check {
        height: 24px;
    }

    .form .tall {
        height: 36px;
        line-height: 15px;
    }

    .include {
        margin-top: 49px;
    }

    .inputs {
        width: 489px;
    }

    .table-box {
        box-sizing: border-box;
        height: 399px;
        border-style: solid;
        border-width: 2px 1px 1px 2px;
        border-color: #888 #fff #fff #888;
        background-color: #fff;
        overflow: hidden;
    }

    table {
        width: 100%;
        table-layout: fixed;
        border-collapse: separate;
        border-spacing: 0;
    }

    th {
        box-sizing: border-box;
        width: 161px;
        height: 21px;
        padding: 0 6px;
        border-right: 1px solid #999;
        border-bottom: 1px solid #999;
        background-color: #f0f0f0;
        font-weight: normal;
        text-align: left;
    }

    th:first-child {
        width: auto;
    }

    td {
        box-sizing: border-box;
        height: 17px;
        padding: 0 0 0 4px;
        border-right: 1px solid #ececec;
        border-bottom: 1px solid #ececec;
        white-space: pre;
        overflow: hidden;
    }

    td + td {
        padding-left: 6px;
    }

    tbody tr:first-child td {
        height: 19px;
        padding-top: 2px;
    }

    th.rest {
        width: 3px;
        padding: 0;
        border-right: 0;
    }

    td.rest {
        padding: 0;
        border-right: 0;
    }

    .picked {
        background-color: #f0f0f0;
    }

    .input-group {
        height: 55px;
        margin-top: 7px;
    }

    .input-group p {
        margin: 4px 0 0 8px;
    }

    .picker {
        width: 271px;
        margin: 4px 0 0 9px;
    }

    .picker select {
        background-color: #0078d7;
        color: #fff;
    }

    .footer {
        display: flex;
        gap: 10px;
        padding-top: 10px;
        margin-right: -6px;
    }

    .footer .btn {
        width: 92px;
    }

    .footer .wide {
        width: 100px;
    }

    .footer .wider {
        width: 108px;
    }

    /* Pen marks */
    .ink {
        position: absolute;
        left: 0;
        top: 0;
        width: 100%;
        pointer-events: none;
    }

    .red-pen, .green-pen {
        fill: none;
        stroke-linecap: round;
        stroke-linejoin: round;
    }

    .red-pen {
        stroke: #e81c1c;
        stroke-width: 10px;
    }

    .green-pen {
        stroke: #25e800;
        stroke-width: 7px;
    }
</style>
